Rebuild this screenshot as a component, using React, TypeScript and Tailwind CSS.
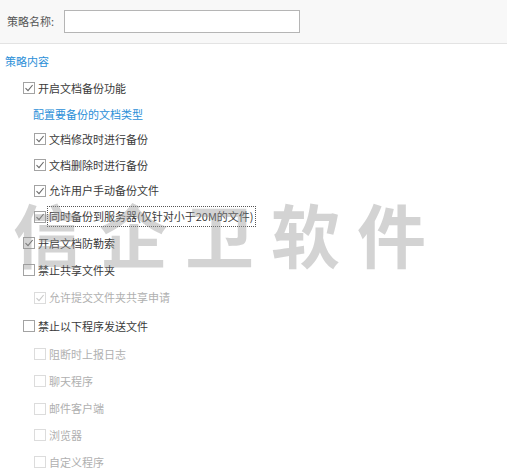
import React from "react";

type Row = {
  label: string;
  h: string;
  indent: "top" | "sub" | "link";
  checked?: boolean;
  disabled?: boolean;
  focused?: boolean;
};

const rows: Row[] = [
  { label: "开启文档备份功能", h: "h-[26.5px]", indent: "top", checked: true },
  { label: "配置要备份的文档类型", h: "h-[25.5px]", indent: "link" },
  { label: "文档修改时进行备份", h: "h-[25.5px]", indent: "sub", checked: true },
  { label: "文档删除时进行备份", h: "h-[25.5px]", indent: "sub", checked: true },
  { label: "允许用户手动备份文件", h: "h-[26px]", indent: "sub", checked: true },
  { label: "同时备份到服务器(仅针对小于20M的文件)", h: "h-[26px]", indent: "sub", checked: true, focused: true },
  { label: "开启文档防勒索", h: "h-[26.5px]", indent: "top", checked: true },
  { label: "禁止共享文件夹", h: "h-[27.5px]", indent: "top" },
  { label: "允许提交文件夹共享申请", h: "h-[28px]", indent: "sub", checked: true, disabled: true },
  { label: "禁止以下程序发送文件", h: "h-[28.5px]", indent: "top" },
  { label: "阻断时上报日志", h: "h-[27.5px]", indent: "sub", disabled: true },
  { label: "聊天程序", h: "h-[27.5px]", indent: "sub", disabled: true },
  { label: "邮件客户端", h: "h-[27px]", indent: "sub", disabled: true },
  { label: "浏览器", h: "h-[26.5px]", indent: "sub", disabled: true },
  { label: "自定义程序", h: "h-[27px]", indent: "sub", disabled: true },
];

function Box({ checked, disabled }: { checked?: boolean; disabled?: boolean }) {
  return (
    <span
      className={`w-[12px] h-[12px] border bg-white flex items-center justify-center shrink-0 ${
        disabled ? "border-[#dcdcdc]" : "border-[#a3a3a3]"
      }`}
    >
      {checked && (
        <svg width="10" height="10" viewBox="0 0 10 10">
          <polyline
            points="1.5,5.2 4,7.6 8.6,2"
            fill="none"
            stroke={disabled ? "#c8c8c8" : "#6a6a6a"}
            strokeWidth="1.1"
          />
        </svg>
      )}
    </span>
  );
}

export default function App() {
  return (
    <div className="relative w-[507px] h-[469px] overflow-hidden bg-white text-[11px] text-[#3a3a3a] font-['Microsoft_YaHei','Noto_Sans_CJK_SC',sans-serif]">
      <div className="h-[44px] bg-[#f8f8f8] border-b border-[#e3e3e3] flex items-center pl-[7px]">
        <span className="w-[57px] text-[#555]">策略名称:</span>
        <div className="w-[236px] h-[23px] bg-white border border-[#b5b5b5]" />
      </div>

      <div className="pt-[4px] flex flex-col">
        <div className="h-[26.5px] flex items-center pl-[5px] text-[#2b8fd8]">策略内容</div>
        {rows.map((r) => (
          <div key={r.label} className={`${r.h} flex items-center`}>
            {r.indent === "link" ? (
              <span className="pl-[33px] text-[#2b8fd8]">{r.label}</span>
            ) : (
              <div className={`flex items-center gap-[3px] ${r.indent === "top" ? "pl-[23px]" : "pl-[34px]"}`}>
                <Box checked={r.checked} disabled={r.disabled} />
                <span
                  className={`${r.disabled ? "text-[#b0b0b0]" : ""} ${
                    r.focused ? "outline outline-1 outline-dotted outline-[#555] outline-offset-[1px]" : ""
                  }`}
                >
                  {r.label}
                </span>
              </div>
            )}
          </div>
        ))}
      </div>

      <div className="absolute left-[13px] top-[199px] pointer-events-none select-none text-[69px] leading-none font-bold tracking-[17px] text-[rgba(150,150,150,0.42)] font-['Noto_Sans_CJK_SC',sans-serif]">
        信企卫软件
      </div>
    </div>
  );
}
